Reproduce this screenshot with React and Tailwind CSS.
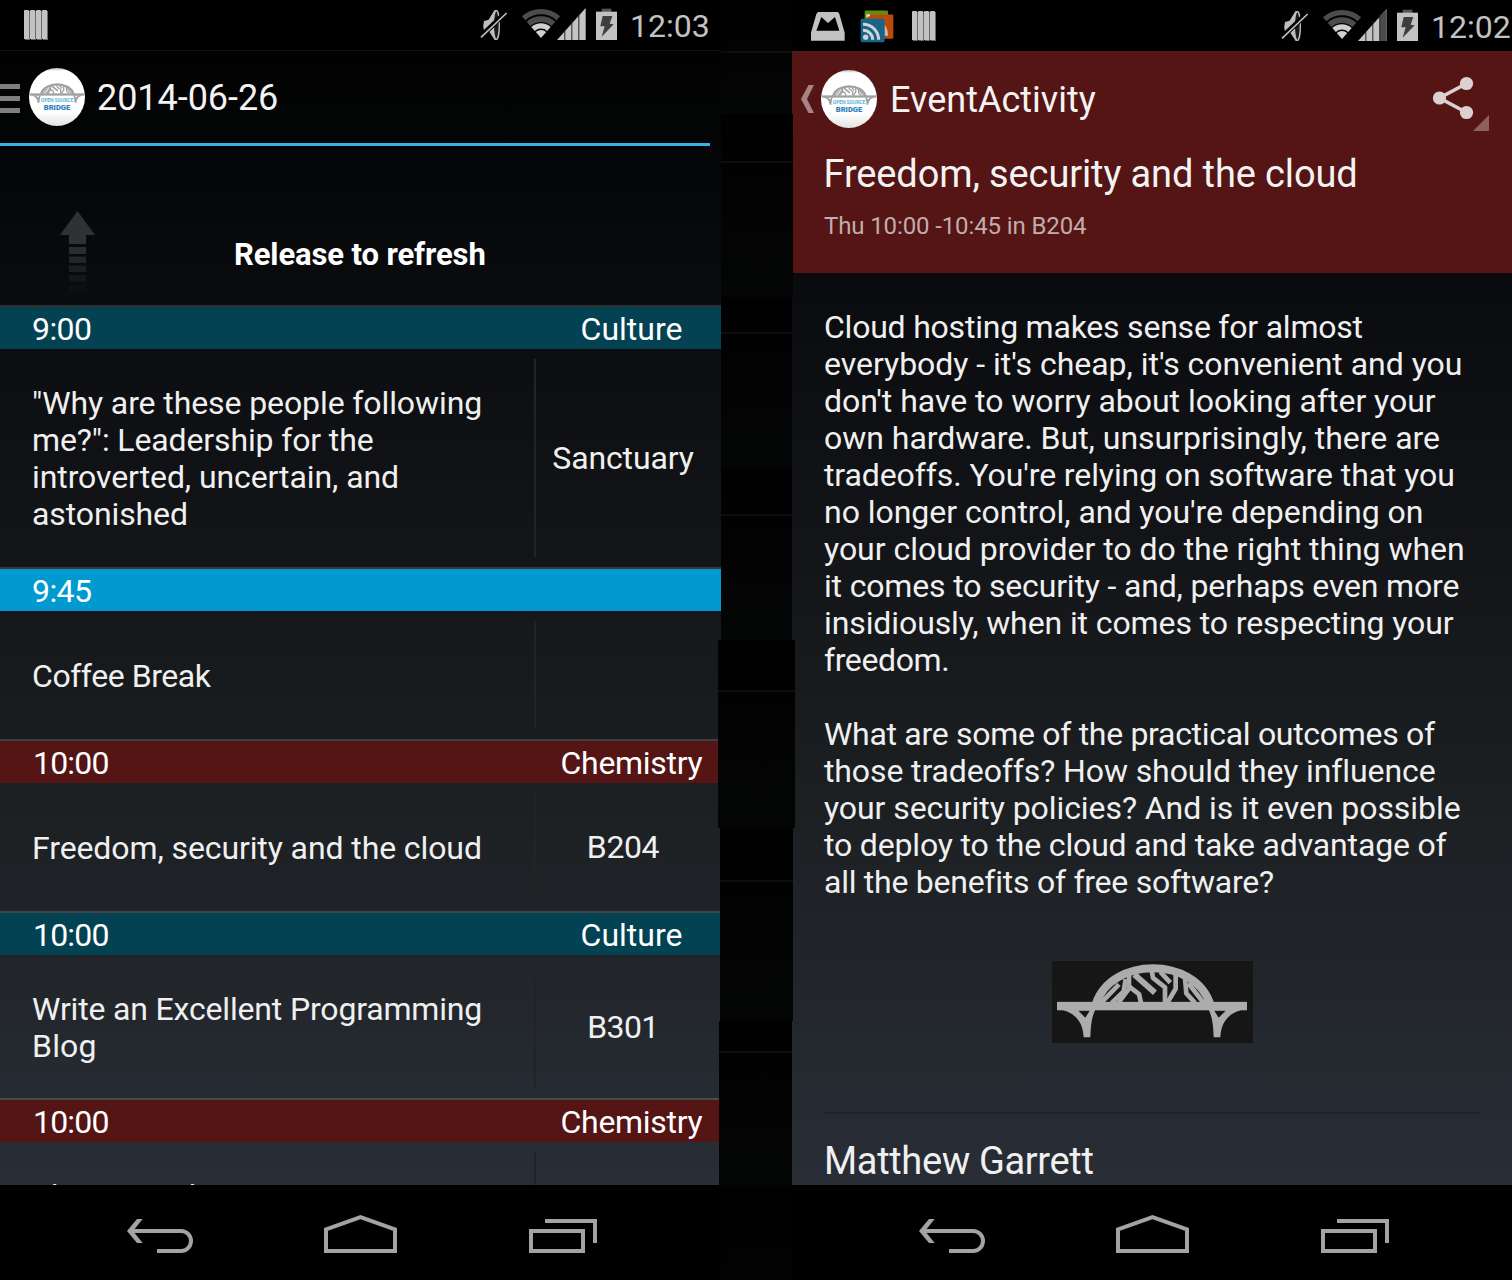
const SCREEN_BG =
  "bg-[linear-gradient(to_bottom,#000_0px,#040506_147px,#0b0c0f_305px,#131518_560px,#1a1d20_740px,#212529_955px,#262b33_1100px,#292e36_1185px)]";

function Bridge({ className }) {
  return (
    <svg className={className} viewBox="52 40 570 222" fill="none" stroke="currentColor" preserveAspectRatio="none">
      <path d="M168 162C215 20 465 20 512 162" strokeWidth="24" />
      <rect x="52" y="155" width="570" height="25" fill="currentColor" stroke="none" />
      <g strokeWidth="14" strokeLinejoin="round">
        <path d="M184 158L238 103" />
        <path d="M216 158L252 124L258 88" />
        <path d="M268 74V116L236 158" />
        <path d="M266 108L298 132L304 158" />
        <path d="M284 74L346 128" strokeWidth="18" />
        <path d="M336 62L340 84L376 112V158" />
        <path d="M362 66L392 98" />
        <path d="M408 72V116L384 156" />
        <path d="M436 84L440 130L466 158" />
        <path d="M446 100L492 158" />
      </g>
      <path
        fill="currentColor"
        stroke="none"
        fillRule="evenodd"
        d="M54 176C106 184 130 214 132 260H152C153 220 158 195 168 176ZM116 181H150L137 202Z"
      />
      <path
        fill="currentColor"
        stroke="none"
        fillRule="evenodd"
        d="M620 176C568 184 544 214 542 260H522C521 220 516 195 506 176ZM558 181H524L537 202Z"
      />
    </svg>
  );
}

function AppLogo() {
  return (
    <div className="flex h-[58px] w-14 shrink-0 flex-col items-center overflow-hidden rounded-[50%] bg-[linear-gradient(to_bottom,#b5b5b5_0px,#fff_3px,#fff_44px,#e2e2e2_58px)] pt-[15px]">
      <Bridge className="h-5 w-[54px] shrink-0 text-[#a0a0a0]" />
      <div className="-mt-[5px] font-['Roboto'] text-[5px] font-bold leading-[5px] tracking-[-0.1px] text-[#5fb4d8] whitespace-nowrap">
        OPEN SOURCE
      </div>
      <div className="mt-px font-['Roboto'] text-[7.6px] font-black leading-[7px] text-[#2f80bd]">BRIDGE</div>
    </div>
  );
}

function BookIcon() {
  return (
    <svg className="h-[30px] w-6" viewBox="0 0 24 30">
      {[0, 6, 12, 18].map((x) => (
        <g key={x}>
          <path d={`M${x + 1} 1h5v29h-5z`} fill="#6a6a6a" />
          <path d={`M${x} .5l1-.5h3l1 .5v28.5h-5z`} fill="#c2c2c2" />
        </g>
      ))}
    </svg>
  );
}

function MailIcon() {
  return (
    <svg className="h-[29px] w-[34px]" viewBox="64 36 102 87">
      <path d="M85 36H145L149 42L165 98V122H64V98L80 42Z" fill="#c2c2c2" />
      <path d="M95 51L115 69L136 51L149 92H80Z" fill="#000" />
    </svg>
  );
}

function FeedIcon() {
  return (
    <svg className="h-[33px] w-[34px]" viewBox="208 29 102 98">
      <rect x="222" y="30" width="70" height="60" rx="4" fill="#668c0c" />
      <rect x="229" y="42" width="79" height="73" rx="4" fill="#b94a0b" />
      <path d="M230 50V44H238" stroke="#ddd" strokeWidth="6" fill="none" />
      <path d="M281 72Q292 84 292 106H281Z" fill="#c8bdb4" />
      <rect x="210" y="55" width="72" height="70" rx="4" fill="#19658a" />
      <circle cx="225" cy="110" r="8" fill="#d0d4d6" />
      <g stroke="#d0d4d6" strokeWidth="9" fill="none">
        <path d="M217 89A29 29 0 0 1 246 118" />
        <path d="M217 71A47 47 0 0 1 264 118" />
      </g>
    </svg>
  );
}

function MuteIcon() {
  return (
    <svg className="h-8 w-7" viewBox="60 28 84 96">
      <path d="M72 64L86 60L103 32L112 31V120L104 121L88 96L72 94Q67 80 72 64Z" fill="#bdbdbd" />
      <ellipse cx="109" cy="76" rx="9" ry="43" fill="#1b1b1b" stroke="#bdbdbd" strokeWidth="4" />
      <path d="M60 113L138 38" stroke="#000" strokeWidth="15" />
      <path d="M63 113L140 40" stroke="#bdbdbd" strokeWidth="5" />
    </svg>
  );
}

function WifiIcon() {
  return (
    <svg className="h-[31px] w-10 shrink-0" viewBox="182 26 120 93" fill="none">
      <g stroke="#4c4c4c">
        <path d="M190 56.4A79 79 0 0 1 294 56.4" strokeWidth="16" />
        <path d="M204.7 73.3A56.5 56.5 0 0 1 279.3 73.3" strokeWidth="17" />
      </g>
      <path d="M218.2 88.8A36 36 0 0 1 265.8 88.8" stroke="#cfcfcf" strokeWidth="16" />
      <path d="M242 116L226.2 98A24 24 0 0 1 257.8 98Z" fill="#cfcfcf" />
    </svg>
  );
}

function SignalIcon({ weak }) {
  return (
    <svg className="h-8 w-[29px] shrink-0" viewBox="290 24 87 96">
      <path d="M290 120L376 24V120Z" fill="#c4c4c4" />
      {weak && <path d="M355 47L376 24V120H355Z" fill="#4c4c4c" />}
      <path d="M313.500 90V120M334.500 60V120M355.500 40V120" stroke="#222" strokeWidth="3" />
    </svg>
  );
}

function BatteryIcon() {
  return (
    <svg className="h-8 w-[21px] shrink-0" viewBox="408 24 63 96">
      <rect x="425" y="26" width="29" height="10" fill="#555" />
      <rect x="408" y="35" width="63" height="85" fill="#c2c2c2" />
      <path d="M428 48H457L449 71L461 73L425 110L434 79H421Z" fill="#3c3f42" />
    </svg>
  );
}

function StatusRight({ time, weak }) {
  return (
    <div className="ml-auto flex items-center">
      <MuteIcon />
      <div className="ml-[13px] -mt-1"><WifiIcon /></div>
      <div className="-ml-[4px] -mt-[3px]"><SignalIcon weak={weak} /></div>
      <div className="ml-[10px] -mt-[3px]"><BatteryIcon /></div>
      <span className="ml-[13px] w-[82px] pt-px text-[32px] leading-[50px] text-[#c2c2c2]">{time}</span>
    </div>
  );
}

function NavBar() {
  return (
    <nav className="flex h-[95px] w-[720px] shrink-0 items-start bg-black pt-[30px] text-[#a3a3a3]">
      <svg className="ml-[127px] h-[38px] w-[66px]" viewBox="127 1215 66 38" fill="none" stroke="currentColor" strokeWidth="4">
        <path d="M131 1231H181A10 10 0 0 1 181 1251H157" />
        <path d="M127 1231L137 1219H142.700L133 1231L142.700 1243H137Z" fill="currentColor" stroke="none" />
      </svg>
      <svg className="ml-[131px] h-[38px] w-[73px]" viewBox="324 1215 73 38" fill="none" stroke="currentColor" strokeWidth="4">
        <path d="M326 1251V1229.300L360.500 1217.200L395 1229.300V1251Z" />
      </svg>
      <svg className="ml-[132px] h-[38px] w-[68px]" viewBox="529 1215 68 38" fill="none" stroke="currentColor" strokeWidth="4">
        <rect x="531" y="1231" width="52" height="20" />
        <path d="M545 1221H595V1243" />
      </svg>
    </nav>
  );
}

const SESSIONS = [
  {
    time: "9:00",
    timeClass: "tracking-[-0.6px]",
    track: "Culture",
    trackClass: "",
    band: "bg-[#034253]",
    height: "h-[218px]",
    room: "Sanctuary",
    roomClass: "tracking-[-0.15px]",
    lines: [
      ['"Why are these people following', "tracking-[-0.1px]"],
      ['me?": Leadership for the', "tracking-[-0.13px]"],
      ["introverted, uncertain, and", "tracking-[-0.09px]"],
      ["astonished", "tracking-[-0.1px]"],
    ],
  },
  {
    time: "9:45",
    timeClass: "tracking-[-0.6px]",
    track: "",
    trackClass: "",
    band: "bg-[#0099d0]",
    height: "h-[128px]",
    room: "",
    roomClass: "",
    lines: [["Coffee Break", "tracking-[-0.45px]"]],
  },
  {
    time: "10:00",
    timeClass: "tracking-[-0.8px] pl-px",
    track: "Chemistry",
    trackClass: "tracking-[-0.3px]",
    band: "bg-[#541514]",
    height: "h-[128px]",
    room: "B204",
    roomClass: "tracking-[-0.4px]",
    lines: [["Freedom, security and the cloud", "tracking-[-0.1px]"]],
  },
  {
    time: "10:00",
    timeClass: "tracking-[-0.8px] pl-px",
    track: "Culture",
    trackClass: "",
    band: "bg-[#034253]",
    height: "h-[143px]",
    room: "B301",
    roomClass: "tracking-[-0.6px]",
    lines: [
      ["Write an Excellent Programming", "tracking-[-0.17px]"],
      ["Blog", "tracking-[0.2px]"],
    ],
  },
  {
    time: "10:00",
    timeClass: "tracking-[-0.8px] pl-px",
    track: "Chemistry",
    trackClass: "tracking-[-0.3px]",
    band: "bg-[#541514]",
    height: "h-[143px]",
    room: "",
    roomClass: "",
    lines: [
      ["The 20,000km view: How GPS", "tracking-[-0.1px]"],
      ["Works", ""],
    ],
  },
];

function Session({ session }) {
  return (
    <section className="shrink-0">
      <header className={`flex h-11 items-center border-t-2 border-white/15 bg-clip-padding pl-8 pt-[2px] text-white ${session.band}`}>
        <span className={`w-[519px] ${session.timeClass}`}>{session.time}</span>
        <span className={`w-[161px] text-center ${session.trackClass}`}>{session.track}</span>
      </header>
      <div className={`flex py-[10px] ${session.height}`}>
        <div className="flex w-[534px] shrink-0 flex-col justify-center pl-8 pt-[2px]">
          {session.lines.map(([text, tracking]) => (
            <div key={text} className={`whitespace-nowrap leading-[37px] ${tracking}`}>{text}</div>
          ))}
        </div>
        <div className="w-[2px] bg-[#222324]" />
        <div className={`flex w-[174px] items-center justify-center pt-px ${session.roomClass}`}>{session.room}</div>
      </div>
    </section>
  );
}

function PullArrow() {
  return (
    <svg className="ml-[60px] mt-[65px] h-20 w-[35px] shrink-0" viewBox="0 0 35 80">
      <path d="M17.500 0L35 24H26V33H9V24H0Z" fill="#303132" />
      <rect x="9" y="36" width="17" height="7" fill="#2b2c2d" />
      <rect x="9" y="45.500" width="17" height="6.500" fill="#242526" />
      <rect x="9" y="54.500" width="17" height="6.500" fill="#1c1d20" />
      <rect x="9" y="64" width="17" height="6.500" fill="#15161b" />
      <rect x="9" y="73.500" width="17" height="6.500" fill="#0e0f11" />
    </svg>
  );
}

function SchedulePhone() {
  return (
    <div className="flex h-[1280px] w-[721px] shrink-0 flex-col">
      <div className={`flex h-[1185px] flex-col overflow-hidden ${SCREEN_BG}`}>
        <div className="flex h-[51px] w-full shrink-0 items-center border-b border-[#111] bg-black pl-6">
          <BookIcon />
          <div className="ml-auto mr-[9px] flex"><StatusRight time="12:03" /></div>
        </div>
        <div className="flex h-[95px] w-[710px] shrink-0 items-center border-b-[3px] border-[#35b3e2] pb-px pt-1">
          <div className="flex w-5 flex-col gap-[7px] text-[#7f7f7f]">
            <div className="h-[5px] bg-current" />
            <div className="h-[5px] bg-current" />
            <div className="h-[5px] bg-current" />
          </div>
          <div className="-mt-1 ml-[9px]"><AppLogo /></div>
          <h1 className="-mt-px ml-3 text-[36px] leading-[44px] tracking-[-0.05px] text-[#f3f3f3]">2014-06-26</h1>
        </div>
        <div className="flex h-[159px] shrink-0">
          <PullArrow />
          <div className="ml-[139px] mt-[90px] text-[31px] font-bold leading-[37px] tracking-[-0.12px] text-white">
            Release to refresh
          </div>
        </div>
        {SESSIONS.map((s, i) => (
          <Session key={i} session={s} />
        ))}
      </div>
      <NavBar />
    </div>
  );
}

const GUTTER = [
  { box: "h-[114px]", line: "pt-[51px]" },
  { box: "h-[183px] -mr-px", line: "pt-[47px]" },
  { box: "h-[171px]", line: "pt-[35px]" },
  { box: "h-[172px]", line: "pt-[46px]" },
  { box: "h-[188px] -ml-[3px] -mr-[3px]", line: "pt-[50px]" },
  { box: "h-[193px] -ml-px -mr-px", line: "pt-[52px]" },
  { box: "h-[164px] -ml-[2px]", line: "pt-[30px]" },
  { box: "h-[95px]", line: "pt-[200px]" },
];

function Gutter() {
  return (
    <div className="z-10 flex h-[1280px] w-[71px] shrink-0 flex-col">
      {GUTTER.map((g, i) => (
        <div key={i} className={`shrink-0 overflow-hidden bg-linear-to-b from-[#010101] to-[#040605] ${g.box} ${g.line}`}>
          <div className="h-[2px] bg-[#0d0e0e]" />
        </div>
      ))}
    </div>
  );
}

const ABSTRACT = [
  ["Cloud hosting makes sense for almost", "tracking-[-0.22px]"],
  ["everybody - it's cheap, it's convenient and you", "tracking-[-0.03px]"],
  ["don't have to worry about looking after your", "tracking-[-0.03px]"],
  ["own hardware. But, unsurprisingly, there are", "tracking-[-0.02px]"],
  ["tradeoffs. You're relying on software that you", "tracking-[-0.1px]"],
  ["no longer control, and you're depending on", "tracking-[-0.04px]"],
  ["your cloud provider to do the right thing when", "tracking-[-0.02px]"],
  ["it comes to security - and, perhaps even more", "tracking-[-0.17px]"],
  ["insidiously, when it comes to respecting your", "tracking-[-0.1px]"],
  ["freedom.", "tracking-[-0.4px]"],
  ["\u00a0", ""],
  ["What are some of the practical outcomes of", "tracking-[-0.3px]"],
  ["those tradeoffs? How should they influence", "tracking-[-0.11px]"],
  ["your security policies? And is it even possible", "tracking-[-0.07px]"],
  ["to deploy to the cloud and take advantage of", "tracking-[-0.16px]"],
  ["all the benefits of free software?", "tracking-[-0.26px]"],
];

function EventPhone() {
  return (
    <div className="flex h-[1280px] w-[720px] shrink-0 flex-col">
      <div className={`flex h-[1185px] flex-col overflow-hidden ${SCREEN_BG}`}>
        <div className="flex h-[51px] shrink-0 items-center bg-black pl-[19px] pt-px">
          <MailIcon />
          <div className="ml-[15px]"><FeedIcon /></div>
          <div className="ml-[18px]"><BookIcon /></div>
          <div className="ml-auto -mr-px flex"><StatusRight time="12:02" weak /></div>
        </div>
        <div className="h-[222px] shrink-0 bg-[#541514]">
          <div className="flex h-24 items-center">
            <svg className="ml-[9px] h-7 w-[13px]" viewBox="0 0 13 28">
              <path d="M7.500 0H13L6 14L13 28H7.500L0 14Z" fill="#a68484" />
            </svg>
            <div className="ml-[7px]"><AppLogo /></div>
            <h1 className="ml-[13px] pt-[2px] text-[36px] leading-[44px] text-[#f3f3f3]">EventActivity</h1>
            <svg className="ml-auto mr-[23px] mt-[9px] h-[55px] w-[57px]" viewBox="1432 76 57 55">
              <path d="M1466.500 83.500L1439.500 98L1466.500 112.500" fill="none" stroke="#ddd0d0" strokeWidth="3.600" />
              <circle cx="1439.500" cy="98" r="6.600" fill="#ddd0d0" />
              <circle cx="1466.500" cy="83.500" r="6.600" fill="#ddd0d0" />
              <circle cx="1466.500" cy="112.500" r="6.600" fill="#ddd0d0" />
              <path d="M1489 115V131H1473Z" fill="#8d6161" />
            </svg>
          </div>
          <h2 className="ml-[31.500px] mt-[5px] text-[38px] leading-[44px] tracking-[-0.12px] text-[#f3f3f3]">
            Freedom, security and the cloud
          </h2>
          <p className="ml-8 mt-[15px] text-[24px] leading-[30px] tracking-[-0.12px] text-[#c0adad]">Thu 10:00 -10:45 in B204</p>
        </div>
        <div className="flex shrink-0 flex-col pl-8 pt-9">
          {ABSTRACT.map(([text, tracking], i) => (
            <div key={i} className={`h-[37px] whitespace-nowrap leading-[37px] ${tracking}`}>{text}</div>
          ))}
          <div className="ml-[228px] mt-[60px] h-[82px] w-[201px] bg-[#161616] pl-[5px] pt-[2px]">
            <Bridge className="h-[75px] w-[190px] text-[#acacac]" />
          </div>
          <div className="mt-[69px] h-[2px] w-[656px] bg-[#202323]" />
          <h3 className="mt-[25px] text-[38px] leading-[44px] tracking-[-0.35px]">Matthew Garrett</h3>
        </div>
      </div>
      <NavBar />
    </div>
  );
}

export default function App() {
  return (
    <main className="flex h-[1280px] w-[1512px] overflow-hidden bg-black font-['Roboto',sans-serif] text-[32px] leading-[37px] text-[#f0f0f0]">
      <SchedulePhone />
      <Gutter />
      <EventPhone />
    </main>
  );
}
